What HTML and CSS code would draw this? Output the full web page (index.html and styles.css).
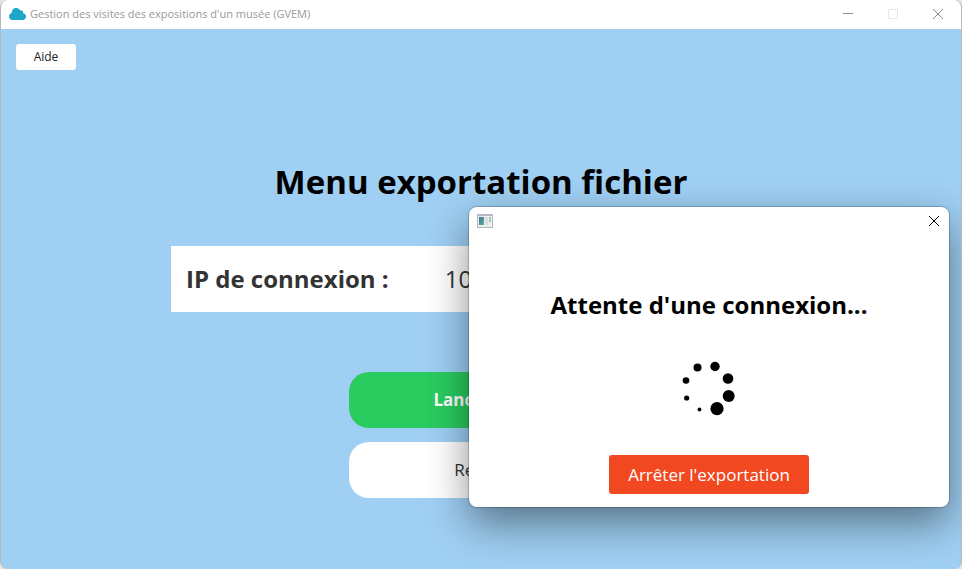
FILE: index.html
```html
<!DOCTYPE html>
<html lang="fr">
<head>
    <meta charset="UTF-8">
    <meta name="viewport" content="width=device-width, initial-scale=1.0">
    <title>Gestion des visites des expositions d'un musée (GVEM)</title>
    <link rel="stylesheet" href="styles.css">
</head>
<body>
    <div class="window">
        <header class="title-bar">
            <svg class="app-icon" width="17" height="12" viewBox="0 0 17 12">
                <path d="M4 12 C1.500 12 0 10.500 0 8.500 C0 6.700 1.200 5.400 2.700 5.100 C2.600 2.200 4.500 0 7.200 0 C9.200 0 10.500 1 11.200 2.400 C13.200 2 14.400 3.300 14.200 5.200 C15.900 5.500 17 6.800 17 8.500 C17 10.500 15.500 12 13.500 12 Z" fill="#1fa5c9"/>
            </svg>
            <span class="app-title">Gestion des visites des expositions d'un musée (GVEM)</span>
            <div class="window-controls">
                <button aria-label="Réduire">
                    <svg width="10" height="10" viewBox="0 0 10 10"><path d="M0 4.500 H10" stroke="#8c8c8c"/></svg>
                </button>
                <button aria-label="Agrandir" disabled>
                    <svg width="10" height="10" viewBox="0 0 10 10"><rect x="0.500" y="0.500" width="9" height="9" rx="0.500" fill="none" stroke="#e6e6e6"/></svg>
                </button>
                <button aria-label="Fermer">
                    <svg width="10" height="10" viewBox="0 0 10 10"><path d="M0 0 L10 10 M10 0 L0 10" stroke="#8c8c8c"/></svg>
                </button>
            </div>
        </header>

        <main class="content">
            <button class="help">Aide</button>
            <h1>Menu exportation fichier</h1>
            <div class="ip-box">
                <span class="ip-label">IP de connexion :</span>
                <span class="ip-value">10</span>
            </div>
            <div class="actions">
                <button class="action start">Lancement</button>
                <button class="action">Retour</button>
            </div>
        </main>

        <div class="dialog" role="dialog" aria-labelledby="dialog-title">
            <div class="dialog-bar">
                <svg width="16" height="14" viewBox="0 0 16 14">
                    <defs>
                        <linearGradient id="pane" x1="0" y1="0" x2="1" y2="1">
                            <stop offset="0" stop-color="#3f6fae"/>
                            <stop offset="1" stop-color="#5fb583"/>
                        </linearGradient>
                    </defs>
                    <rect x="0.500" y="0.500" width="15" height="13" fill="#eceeef" stroke="#b4b9be"/>
                    <path d="M0 1 H16" stroke="#b4bac2" stroke-width="2"/>
                    <rect x="2" y="3" width="5" height="8" fill="url(#pane)"/>
                    <rect x="8" y="3" width="3" height="8" fill="#dcdcdc"/>
                    <rect x="12" y="3" width="2" height="5" fill="#9ccbc3"/>
                </svg>
                <button class="dialog-close" aria-label="Fermer">
                    <svg width="10" height="10" viewBox="0 0 10 10"><path d="M0 0 L10 10 M10 0 L0 10" stroke="#000"/></svg>
                </button>
            </div>
            <h2 id="dialog-title">Attente d'une connexion...</h2>
            <svg class="spinner" width="54" height="56" viewBox="0 0 54 56">
                <circle cx="15.500" cy="6.500" r="4"/>
                <circle cx="33" cy="5.500" r="4.700"/>
                <circle cx="46" cy="17.500" r="5.300"/>
                <circle cx="46.700" cy="35" r="6"/>
                <circle cx="35" cy="47.700" r="6.600"/>
                <circle cx="17.500" cy="48.500" r="1.900"/>
                <circle cx="4.700" cy="37" r="2.600"/>
                <circle cx="4" cy="19.500" r="3.300"/>
            </svg>
            <button class="stop">Arrêter l'exportation</button>
        </div>
    </div>
</body>
</html>
```
FILE: styles.css
```css
* {
    box-sizing: border-box;
}

body {
    margin: 0;
    background-color: #e4e4e4;
    font-family: "Open Sans", "Noto Sans", sans-serif;
}

button {
    padding: 0;
    border: none;
    background: none;
    font-family: inherit;
    cursor: pointer;
}

svg {
    display: block;
}

.window {
    position: relative;
    display: flex;
    flex-direction: column;
    min-height: 100vh;
    border: solid #b8b8b8;
    border-width: 0 1px;
    border-radius: 8px;
    background-color: #9fcff3;
    overflow: hidden;
}

.title-bar {
    display: flex;
    align-items: center;
    height: 29px;
    padding: 0 18px 2px 8px;
    background-color: white;
}

.app-title {
    margin-left: 4px;
    font-size: 11px;
    color: #999;
}

.window-controls {
    display: flex;
    gap: 35px;
    margin-left: auto;
}

.content {
    display: flex;
    flex-direction: column;
    align-items: center;
    padding: 15px;
}

.help {
    align-self: flex-start;
    width: 60px;
    height: 26px;
    padding-bottom: 2px;
    border-radius: 3px;
    background-color: white;
    font-size: 12px;
    color: #222;
}

h1 {
    margin: 88px 0 40px;
    font-size: 33px;
    line-height: 48px;
    color: black;
}

.ip-box {
    display: flex;
    align-items: center;
    gap: 56px;
    width: 100%;
    max-width: 620px;
    height: 66px;
    padding: 0 15px 2px;
    background-color: white;
    font-size: 24px;
    color: #333;
}

.ip-label {
    font-weight: bold;
}

.actions {
    display: flex;
    flex-direction: column;
    gap: 14px;
    width: 264px;
    margin-top: 60px;
}

.action {
    height: 56px;
    padding-bottom: 2px;
    border-radius: 20px;
    background-color: white;
    font-size: 17px;
    color: #333;
}

.start {
    background-color: #2acb5f;
    font-weight: bold;
    color: white;
}

.dialog {
    position: absolute;
    top: 207px;
    right: 12px;
    display: flex;
    flex-direction: column;
    align-items: center;
    width: 480px;
    padding-bottom: 13px;
    border-radius: 8px;
    background-color: white;
    box-shadow: 0 0 1px 1px rgba(0, 0, 0, 0.2), 0 16px 42px rgba(0, 0, 0, 0.45);
}

.dialog-bar {
    display: flex;
    justify-content: space-between;
    align-items: center;
    align-self: stretch;
    height: 28px;
    padding: 0 10px 0 8px;
}

h2 {
    margin: 54px 0 40px;
    font-size: 24px;
    line-height: 32px;
    color: black;
}

.spinner {
    margin-bottom: 38px;
}

.stop {
    width: 200px;
    height: 39px;
    border-radius: 3px;
    background-color: #f24822;
    font-size: 17px;
    color: white;
}
```
